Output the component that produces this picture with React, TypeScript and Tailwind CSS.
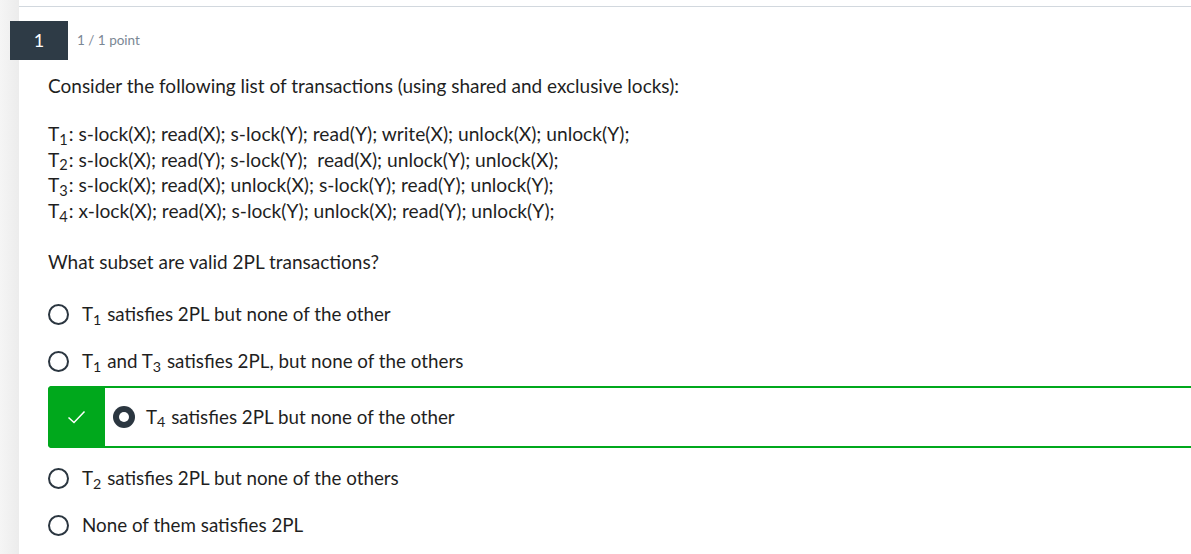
import React from "react";

function T({ n }: { n: number }) {
  return (
    <span>
      T<sub className="text-[0.76em] relative top-[0.26em] bottom-auto align-baseline pr-[1px]">{n}</sub>
    </span>
  );
}

function Radio({ checked }: { checked?: boolean }) {
  if (checked) {
    return (
      <span className="w-[22px] h-[22px] rounded-full bg-[#2b3640] flex items-center justify-center shrink-0">
        <span className="w-[10px] h-[10px] rounded-full bg-white" />
      </span>
    );
  }
  return <span className="w-[21px] h-[21px] rounded-full border-2 border-[#2b3640] shrink-0" />;
}

function Option({ children }: { children: React.ReactNode }) {
  return (
    <div className="flex items-center gap-[13px] h-[47px]">
      <Radio />
      <span>{children}</span>
    </div>
  );
}

export default function App() {
  const lines: [number, string][] = [
    [1, ": s-lock(X); read(X); s-lock(Y); read(Y); write(X); unlock(X); unlock(Y);"],
    [2, ": s-lock(X); read(Y); s-lock(Y);  read(X); unlock(Y); unlock(X);"],
    [3, ": s-lock(X); read(X); unlock(X); s-lock(Y); read(Y); unlock(Y);"],
    [4, ": x-lock(X); read(X); s-lock(Y); unlock(X); read(Y); unlock(Y);"],
  ];

  return (
    <div
      className="flex w-full h-[554px] bg-white overflow-hidden text-[#1f1f1f]"
      style={{ fontFamily: "Lato, 'Open Sans', sans-serif" }}
    >
      <div className="w-[19px] shrink-0 bg-gradient-to-r from-[#f5f5f5] to-[#ececec]" />
      <div className="flex-1 mt-[6px] border-t border-[#d2d8de]">
        <div className="flex items-center -ml-[9px] mt-[14px]">
          <div className="w-[58px] h-[39px] bg-[#2e3b46] text-white flex items-center justify-center text-[18px]">
            1
          </div>
          <span className="ml-[9px] text-[13.5px] text-[#7b8794]">1 / 1 point</span>
        </div>

        <div className="pl-[29px] text-[19px]">
          <p className="mt-[13px] leading-[25px]">
            Consider the following list of transactions (using shared and exclusive locks):
          </p>
          <div className="mt-[23px] leading-[25.7px] whitespace-pre text-[19.2px]">
            {lines.map(([n, s]) => (
              <div key={n}>
                <T n={n} />
                {s}
              </div>
            ))}
          </div>
          <p className="mt-[25px] leading-[25px]">What subset are valid 2PL transactions?</p>

          <div className="mt-[17px] text-[18.8px]">
            <Option>
              <T n={1} /> satisfies 2PL but none of the other
            </Option>
            <Option>
              <T n={1} /> and <T n={3} /> satisfies 2PL, but none of the others
            </Option>
            <div className="flex items-stretch h-[62px] mt-[1px] border-2 border-r-0 border-[#00a81c] rounded-l-[4px]">
              <div className="w-[57px] bg-[#00a81c] flex items-center justify-center -ml-[2px] -my-[2px] rounded-l-[4px]">
                <svg width="19" height="14" viewBox="0 0 19 14" fill="none">
                  <path d="M1.5 7.5 L7 12.5 L17.5 1.5" stroke="white" strokeWidth="1.5" />
                </svg>
              </div>
              <div className="flex items-center gap-[11px] pl-[8px]">
                <Radio checked />
                <span>
                  <T n={4} /> satisfies 2PL but none of the other
                </span>
              </div>
            </div>
            <div className="mt-[7px]">
              <Option>
                <T n={2} /> satisfies 2PL but none of the others
              </Option>
              <Option>None of them satisfies 2PL</Option>
            </div>
          </div>
        </div>
      </div>
    </div>
  );
}
